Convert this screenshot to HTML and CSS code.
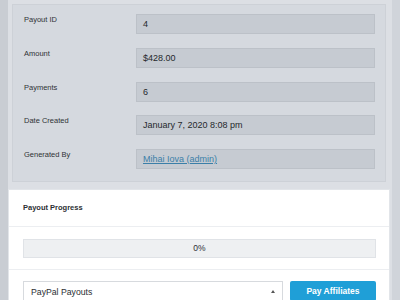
FILE: index.html
```html
<!DOCTYPE html>
<html lang="en">
<head>
    <meta charset="UTF-8">
    <meta name="viewport" content="width=device-width, initial-scale=1.0">
    <title>Payout</title>
    <link rel="stylesheet" href="styles.css">
</head>
<body>
    <div class="edge"></div>
    <div class="main">
        <div class="details">
            <div class="row">
                <div class="row__label">Payout ID</div>
                <div class="row__value">4</div>
            </div>
            <div class="row">
                <div class="row__label">Amount</div>
                <div class="row__value">$428.00</div>
            </div>
            <div class="row">
                <div class="row__label">Payments</div>
                <div class="row__value">6</div>
            </div>
            <div class="row">
                <div class="row__label">Date Created</div>
                <div class="row__value">January 7, 2020 8:08 pm</div>
            </div>
            <div class="row">
                <div class="row__label">Generated By</div>
                <div class="row__value"><a href="#">Mihai Iova (admin)</a></div>
            </div>
        </div>

        <div class="progress-card">
            <div class="progress-card__head">Payout Progress</div>
            <div class="progress-card__body">
                <div class="progress">0%</div>
            </div>
            <div class="progress-card__foot">
                <div class="select">
                    <span>PayPal Payouts</span>
                    <span class="select__arrow"></span>
                </div>
                <button class="btn-pay">Pay Affiliates</button>
            </div>
        </div>
    </div>
    <div class="edge edge--right"></div>
</body>
</html>
```

FILE: styles.css
```css
body {
    margin: 0;
    display: flex;
    height: 300px;
    overflow: hidden;
    background-color: #d8dbe1;
    font-family: 'Liberation Sans', Arial, sans-serif;
    color: #2c2f33;
}

.edge {
    width: 8px;
    flex-shrink: 0;
    background-color: #c9cdd3;
}

.edge--right {
    background-color: #d0d4da;
}

.main {
    flex: 1;
    background-color: #dcdfe4;
}

.details {
    margin: 4px 6px 0 4px;
    padding: 9px 10px 12px 11px;
    background-color: #d5d9df;
    border: 1px solid #cdd1d7;
    display: flex;
    flex-direction: column;
    gap: 13.75px;
}

.row {
    display: flex;
    align-items: flex-start;
}

.row__label {
    width: 112px;
    font-size: 7.5px;
    line-height: 12px;
    color: #2f3236;
}

.row__value {
    flex: 1;
    height: 18px;
    line-height: 18px;
    padding-left: 6px;
    font-size: 9px;
    background-color: #c6cbd2;
    border: 1px solid #bcc1c8;
    color: #25282c;
}

.row__value a {
    color: #3b7fa8;
}

.progress-card {
    margin: 7px 2px 0 0;
    background-color: #fff;
    border: 1px solid #e2e5e9;
    height: 120px;
}

.progress-card__head {
    height: 36px;
    line-height: 36px;
    padding-left: 14px;
    font-size: 7.5px;
    font-weight: bold;
    border-bottom: 1px solid #eceef1;
}

.progress-card__body {
    padding: 12px 13px 11px 14px;
    border-bottom: 1px solid #eceef1;
}

.progress {
    height: 17px;
    line-height: 17px;
    text-align: center;
    font-size: 8.5px;
    background-color: #eef0f2;
    border: 1px solid #e0e3e7;
}

.progress-card__foot {
    display: flex;
    gap: 7px;
    padding: 11px 13px 0 14px;
}

.select {
    flex: 1;
    height: 19px;
    display: flex;
    align-items: center;
    justify-content: space-between;
    padding: 0 7px;
    font-size: 8.7px;
    border: 1px solid #d7dade;
}

.select__arrow {
    border-left: 2px solid transparent;
    border-right: 2px solid transparent;
    border-bottom: 3px solid #555;
}

.btn-pay {
    width: 86px;
    height: 20px;
    padding: 0;
    border: none;
    border-radius: 2px;
    background-color: #1f9fd7;
    color: #fff;
    font-family: inherit;
    font-size: 8.5px;
    font-weight: bold;
}
```
